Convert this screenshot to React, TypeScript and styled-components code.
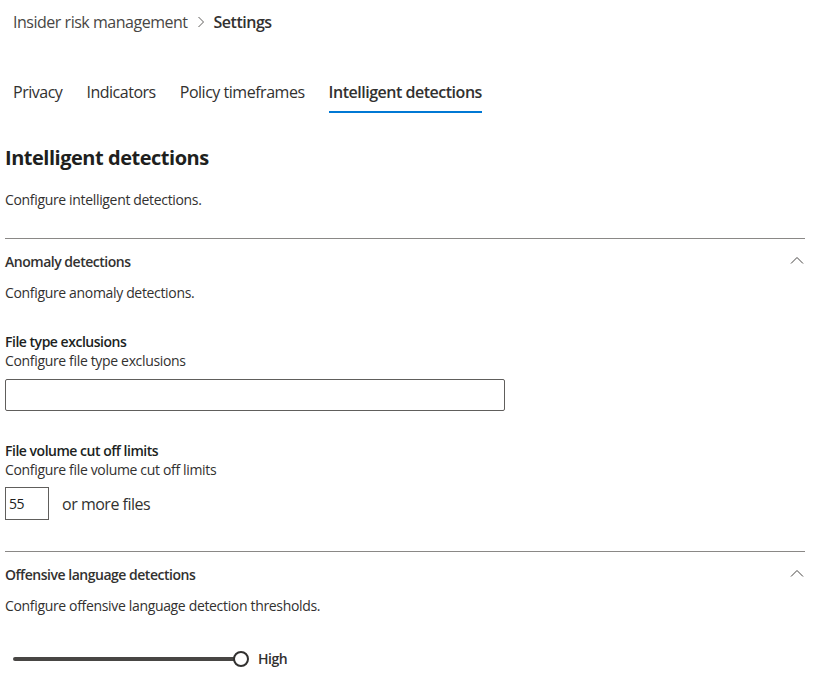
import React, { useState } from "react";
import styled, { createGlobalStyle } from "styled-components";

const GlobalStyle = createGlobalStyle`
  body {
    margin: 0;
    background: #ffffff;
    font-family: "Segoe UI", "Open Sans", "Liberation Sans", sans-serif;
    letter-spacing: -0.03em;
    color: #323130;
  }
  button, input {
    letter-spacing: -0.03em;
  }
`;

const Page = styled.div`
  width: 830px;
  height: 689px;
  overflow: hidden;
  padding-left: 5px;
  box-sizing: border-box;
`;

const Breadcrumb = styled.nav`
  display: flex;
  align-items: center;
  gap: 9px;
  margin-top: 10px;
  padding-left: 8px;
  font-size: 16px;
  line-height: 24px;
`;

const Crumb = styled.span<{ $current?: boolean }>`
  font-weight: ${(p) => (p.$current ? 600 : 400)};
  color: ${(p) => (p.$current ? "#323130" : "#484644")};
`;

const TabBar = styled.div`
  display: flex;
  gap: 24px;
  margin-top: 46px;
  padding-left: 8px;
`;

const Tab = styled.button<{ $active?: boolean }>`
  border: none;
  background: none;
  padding: 0 0 7px;
  font-family: inherit;
  font-size: 16px;
  line-height: 24px;
  color: #323130;
  font-weight: ${(p) => (p.$active ? 600 : 400)};
  border-bottom: 2px solid ${(p) => (p.$active ? "#0078d4" : "transparent")};
  cursor: pointer;
`;

const Content = styled.div`
  width: 800px;
`;

const Heading = styled.h1`
  margin: 31px 0 0;
  font-size: 20px;
  line-height: 28px;
  font-weight: 700;
  color: #201f1e;
`;

const Text = styled.p<{ $gap: number }>`
  margin: ${(p) => p.$gap}px 0 0;
  font-size: 14px;
  line-height: 20px;
  letter-spacing: -0.024em;
`;

const Divider = styled.hr<{ $gap: number }>`
  margin: ${(p) => p.$gap}px 0 0;
  border: none;
  border-top: 1px solid #8a8886;
`;

const SectionHeader = styled.div`
  display: flex;
  align-items: center;
  justify-content: space-between;
  margin-top: 13px;
`;

const SectionTitle = styled.h2`
  margin: 0;
  font-size: 14px;
  line-height: 20px;
  font-weight: 600;
`;

const Collapse = styled.button`
  border: none;
  background: none;
  padding: 0;
  width: 16px;
  height: 16px;
  display: flex;
  align-items: center;
  justify-content: center;
  margin-top: -4px;
  cursor: pointer;
`;

const FieldLabel = styled.div<{ $gap: number }>`
  margin-top: ${(p) => p.$gap}px;
  font-size: 14px;
  line-height: 20px;
  font-weight: 600;
  color: #201f1e;
`;

const FieldHint = styled.div`
  font-size: 14px;
  line-height: 18px;
  letter-spacing: -0.024em;
`;

const TextInput = styled.input`
  display: block;
  margin-top: 9px;
  width: 500px;
  height: 32px;
  box-sizing: border-box;
  border: 1px solid #605e5c;
  border-radius: 2px;
  font-family: inherit;
  font-size: 14px;
  padding: 0 8px;
`;

const NumberRow = styled.div`
  display: flex;
  align-items: center;
  gap: 13px;
  margin-top: 8px;
`;

const NumberInput = styled.input`
  width: 44px;
  height: 33px;
  box-sizing: border-box;
  border: 1px solid #605e5c;
  font-family: inherit;
  font-size: 14px;
  padding: 0 0 0 3px;
  color: #201f1e;
`;

const Suffix = styled.span`
  font-size: 16px;
  line-height: 24px;
`;

const SliderRow = styled.div`
  display: flex;
  align-items: center;
  gap: 9px;
  margin-top: 33px;
  padding-left: 8px;
`;

const Track = styled.div`
  position: relative;
  width: 236px;
  height: 16px;
`;

const TrackLine = styled.div`
  position: absolute;
  left: 0;
  right: 8px;
  top: 6px;
  height: 4px;
  background: #484644;
  border-radius: 2px;
`;

const Thumb = styled.div`
  position: absolute;
  right: 0;
  top: 0;
  width: 16px;
  height: 16px;
  box-sizing: border-box;
  border: 2px solid #323130;
  border-radius: 50%;
  background: #ffffff;
`;

const SliderValue = styled.span`
  font-size: 14px;
  font-weight: 600;
  line-height: 20px;
`;

const ChevronUp = () => (
  <svg width="14" height="8" viewBox="0 0 14 8" fill="none">
    <path d="M1 7.5 L7 1.5 L13 7.5" stroke="#484644" strokeWidth="1" />
  </svg>
);

const ChevronRight = () => (
  <svg width="8" height="12" viewBox="0 0 8 12" fill="none">
    <path d="M1.5 1 L6.5 6 L1.5 11" stroke="#605e5c" strokeWidth="1" />
  </svg>
);

const tabs = ["Privacy", "Indicators", "Policy timeframes", "Intelligent detections"];

const App = () => {
  const [active, setActive] = useState(3);
  const [files, setFiles] = useState("55");

  return (
    <>
      <GlobalStyle />
      <Page>
        <Breadcrumb>
          <Crumb>Insider risk management</Crumb>
          <ChevronRight />
          <Crumb $current>Settings</Crumb>
        </Breadcrumb>
        <TabBar>
          {tabs.map((t, i) => (
            <Tab key={t} $active={i === active} onClick={() => setActive(i)}>
              {t}
            </Tab>
          ))}
        </TabBar>
        <Content>
          <Heading>Intelligent detections</Heading>
          <Text $gap={18}>Configure intelligent detections.</Text>
          <Divider $gap={28} />

          <SectionHeader>
            <SectionTitle>Anomaly detections</SectionTitle>
            <Collapse>
              <ChevronUp />
            </Collapse>
          </SectionHeader>
          <Text $gap={11}>Configure anomaly detections.</Text>

          <FieldLabel $gap={29}>File type exclusions</FieldLabel>
          <FieldHint>Configure file type exclusions</FieldHint>
          <TextInput />

          <FieldLabel $gap={30}>File volume cut off limits</FieldLabel>
          <FieldHint>Configure file volume cut off limits</FieldHint>
          <NumberRow>
            <NumberInput value={files} onChange={(e) => setFiles(e.target.value)} />
            <Suffix>or more files</Suffix>
          </NumberRow>

          <Divider $gap={31} />
          <SectionHeader>
            <SectionTitle>Offensive language detections</SectionTitle>
            <Collapse>
              <ChevronUp />
            </Collapse>
          </SectionHeader>
          <Text $gap={11}>Configure offensive language detection thresholds.</Text>

          <SliderRow>
            <Track>
              <TrackLine />
              <Thumb />
            </Track>
            <SliderValue>High</SliderValue>
          </SliderRow>
        </Content>
      </Page>
    </>
  );
};

export default App;
